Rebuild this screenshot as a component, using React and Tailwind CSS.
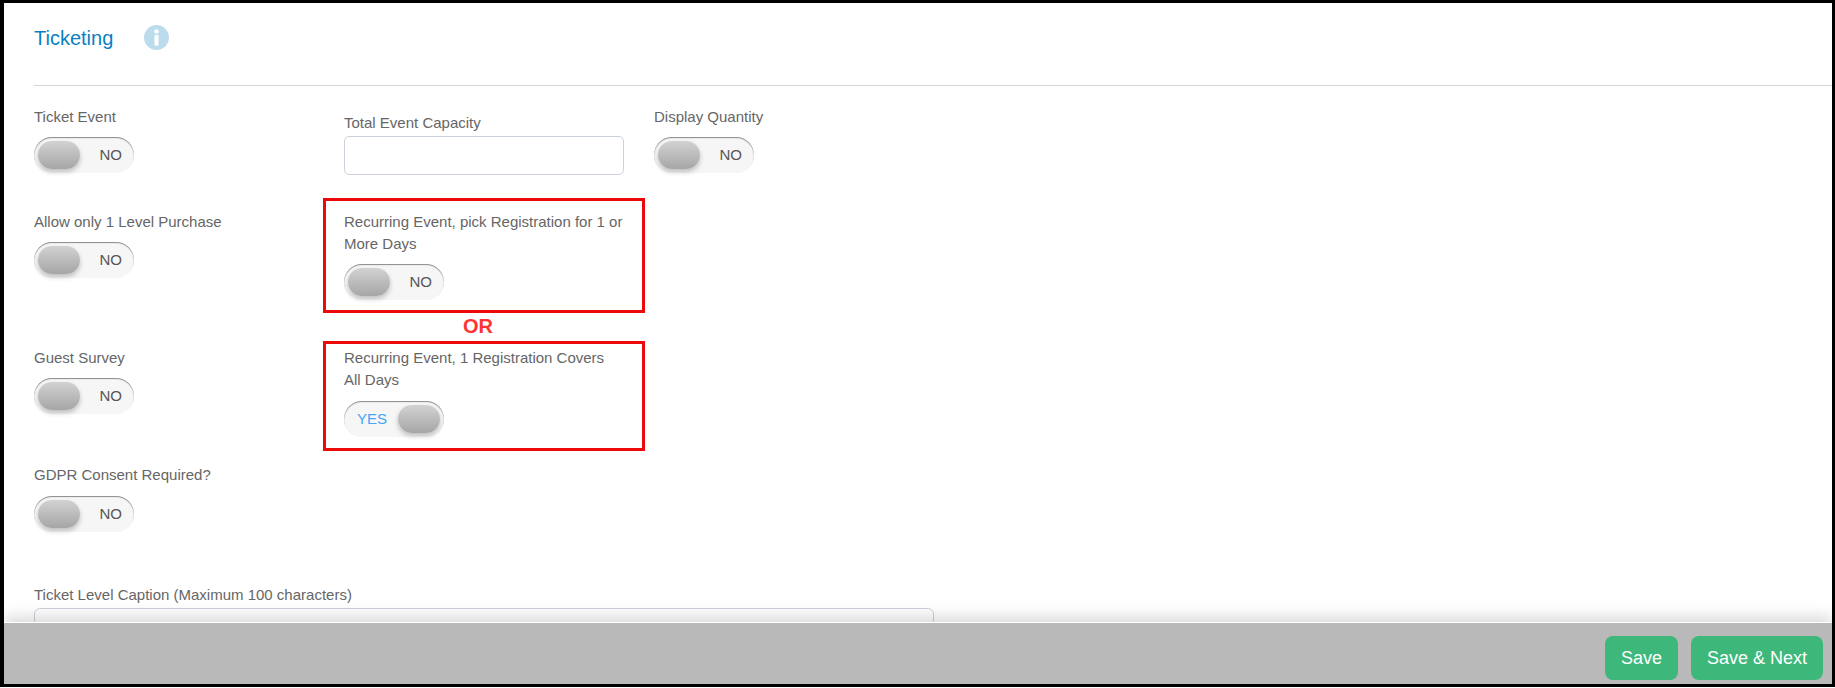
import React from "react";

function Toggle({ on }) {
  return (
    <div className="relative w-[100px] h-9 rounded-full bg-[#f6f6f6] shadow-[inset_0_1px_1px_rgba(0,0,0,0.45)] flex items-center">
      {on ? (
        <>
          <span className="ml-[13px] text-[15px] text-[#42a5f5]">YES</span>
          <span className="absolute right-[4px] top-[4px] w-[42px] h-[28px] rounded-[14px] bg-gradient-to-b from-[#d2d2d2] to-[#a6a6a6] shadow-[0_3px_5px_rgba(0,0,0,0.22)]" />
        </>
      ) : (
        <>
          <span className="absolute left-[4px] top-[4px] w-[42px] h-[28px] rounded-[14px] bg-gradient-to-b from-[#d2d2d2] to-[#a6a6a6] shadow-[0_3px_5px_rgba(0,0,0,0.22)]" />
          <span className="ml-auto mr-[12px] text-[15px] text-[#555]">NO</span>
        </>
      )}
    </div>
  );
}

function Label({ children }) {
  return <div className="text-[15px] leading-[22px] text-[#666]">{children}</div>;
}

function ToggleField({ label, on, gap = "mt-[9px]" }) {
  return (
    <div>
      <Label>{label}</Label>
      <div className={gap}>
        <Toggle on={on} />
      </div>
    </div>
  );
}

// red annotation frames drawn over the form
function RedBox({ className }) {
  return <div className={"absolute left-[-21px] w-[322px] border-[3px] border-[#ec0909] " + className} />;
}

export default function App() {
  return (
    <div className="relative h-[688px] overflow-hidden bg-white font-['Liberation_Sans',Arial,sans-serif] pb-px">
      <div className="relative h-full border-t-[3px] border-l-[4px] border-r-[3px] border-b-[3px] border-black overflow-hidden">
        <div className="flex items-center h-[70px] pl-[30px]">
          <span className="text-[20px] text-[#0a80c2]">Ticketing</span>
          <svg className="ml-[31px] mt-[-1px]" width="25" height="25" viewBox="0 0 25 25">
            <circle cx="12.5" cy="12.5" r="12.5" fill="#bbdcec" />
            <circle cx="12.5" cy="6.5" r="2.3" fill="#fff" />
            <rect x="10.5" y="10" width="4" height="10.5" fill="#fff" />
          </svg>
        </div>
        <div className="ml-[30px] mt-[12px] h-px bg-[#d5d5d5]" />

        <div className="pl-[30px] mt-[20px]">
          <div className="grid grid-cols-[310px_310px_1fr] h-[69px]">
            <ToggleField label="Ticket Event" />
            <div className="pt-[6px]">
              <Label>Total Event Capacity</Label>
              <input className="mt-[2px] block w-[280px] h-[39px] rounded-[5px] border border-[#ccd2da] bg-white" />
            </div>
            <ToggleField label="Display Quantity" />
          </div>

          <div className="grid grid-cols-[310px_310px_1fr] h-[89px] mt-[36px]">
            <ToggleField label="Allow only 1 Level Purchase" />
            <div className="relative w-[280px]">
              <RedBox className="top-[-13px] h-[115px]" />
              <ToggleField label="Recurring Event, pick Registration for 1 or More Days" />
              <div className="absolute left-[-27px] w-[322px] top-[104px] text-center text-[20px] leading-[22px] font-bold text-[#ff3333]">OR</div>
            </div>
          </div>

          <div className="grid grid-cols-[310px_310px_1fr] h-[90px] mt-[47px]">
            <ToggleField label="Guest Survey" />
            <div className="relative w-[280px]">
              <RedBox className="top-[-6px] h-[110px]" />
              <ToggleField label="Recurring Event, 1 Registration Covers All Days" on gap="mt-[10px]" />
            </div>
          </div>

          <div className="h-[68px] mt-[27px]">
            <ToggleField label="GDPR Consent Required?" gap="mt-[10px]" />
          </div>

          <div className="mt-[52px]">
            <Label>Ticket Level Caption (Maximum 100 characters)</Label>
            <input className="mt-[2px] block w-[900px] h-[39px] rounded-[6px] border border-[#ccd2da] bg-white" />
          </div>
        </div>

        <div className="absolute left-0 right-0 bottom-0 h-[62px] bg-[#b9b9b9] border-t border-white shadow-[0_-6px_14px_rgba(0,0,0,0.14)] flex items-start justify-end gap-[13px] pr-[9px] pt-[13px]">
          <button className="w-[73px] h-[44px] rounded-[8px] bg-[#3db87a] text-white text-[18px]">Save</button>
          <button className="w-[132px] h-[44px] rounded-[8px] bg-[#3db87a] text-white text-[18px]">Save &amp; Next</button>
        </div>
      </div>
    </div>
  );
}
